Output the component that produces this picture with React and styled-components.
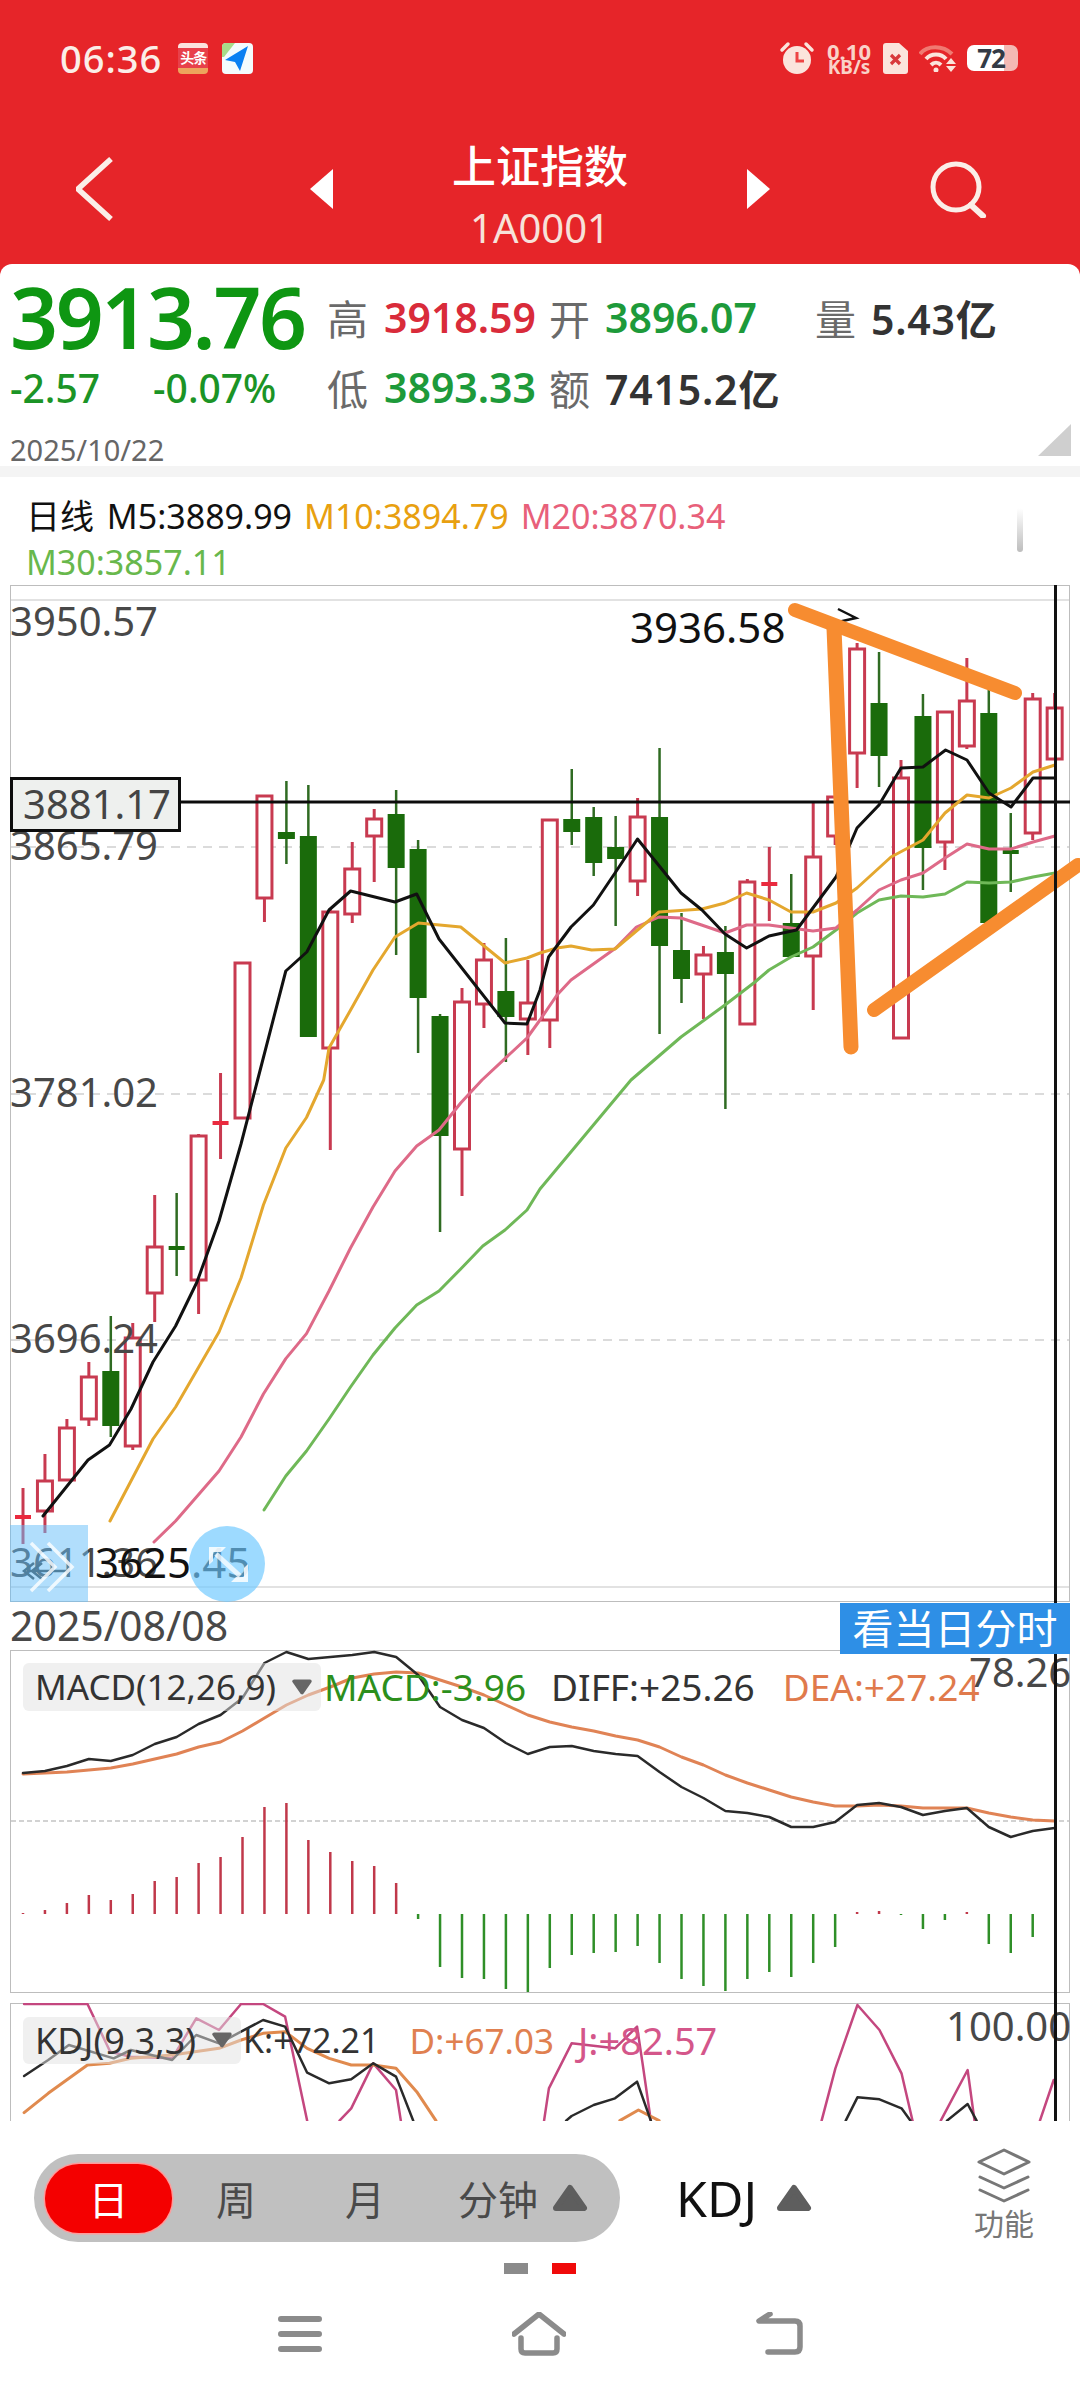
import React from "react"
import styled, {createGlobalStyle} from "styled-components"

const GlobalStyle = createGlobalStyle`
  html, body {
    margin: 0;
    padding: 0;
    background: #fff;
  }
  body {
    font-family: "Noto Sans", "Noto Sans CJK SC", sans-serif;
  }
  * {
    box-sizing: border-box;
  }
`

const Page = styled.div`
  width: 1080px;
  height: 2400px;
  overflow: hidden;
  background: #e62529;
`

/* ---- red header ---- */
const Header = styled.header`
  height: 264px;
  padding-top: 40px;
  color: #fbeee8;
`

const StatusBar = styled.div`
  height: 36px;
  padding: 0 62px 0 60px;
  display: flex;
  align-items: center;
  justify-content: space-between;
`

const StatusGroup = styled.div`
  display: flex;
  align-items: center;
  gap: ${props => props.$gap || 14}px;
`

const Clock = styled.span`
  font-size: 38px;
  font-weight: 500;
  line-height: 36px;
  letter-spacing: 1px;
  margin-right: 2px;
`

const NewsIcon = styled.div`
  width: 30px;
  height: 31px;
  border-radius: 4px;
  background: #e8404a;
  border-top: 5px solid #fbe3de;
  border-bottom: 6px solid #eda45c;
  font-size: 14px;
  font-weight: 700;
  line-height: 20px;
  text-align: center;
  letter-spacing: -1px;
  color: #fff;
  overflow: hidden;
`

const Speed = styled.div`
  width: 46px;
  display: flex;
  flex-direction: column;
  align-items: center;
  color: #f9d2c8;
  font-weight: 700;
`

const SpeedLine = styled.span`
  font-size: ${props => props.$size}px;
  line-height: ${props => props.$size - 4}px;
`

const Battery = styled.div`
  width: 51px;
  height: 26px;
  border-radius: 7px;
  background: linear-gradient(90deg, #fff 0, #fff 72%, #f4b9b4 72%, #f4b9b4 100%);
  color: #333a45;
  font-size: 26px;
  font-weight: 700;
  line-height: 26px;
  text-align: center;
  letter-spacing: -1px;
  padding-right: 3px;
`

const NavBar = styled.div`
  margin-top: 65px;
  height: 96px;
  display: grid;
  grid-template-columns: 1fr auto 1fr;
  align-items: center;
`

const NavSide = styled.div`
  display: flex;
  justify-content: ${props => props.$end ? "flex-end" : "flex-start"};
  padding: 0 ${props => props.$end ? 92 : 0}px 0 ${props => props.$end ? 0 : 76}px;
`

const NavCenter = styled.div`
  display: flex;
  align-items: center;
  gap: 115px;
`

const TitleBlock = styled.div`
  width: 182px;
  height: 96px;
  text-align: center;
`

const Title = styled.div`
  font-size: 44px;
  font-weight: 500;
  line-height: 50px;
  color: #fff;
`

const Code = styled.div`
  margin-top: 14px;
  font-size: 40px;
  line-height: 46px;
  color: #f7e2da;
`

/* ---- quote block ---- */
const Quote = styled.section`
  height: 202px;
  background: #fff;
  border-radius: 12px 12px 0 0;
  padding-top: 18px;
`

const QuoteRows = styled.div`
  display: grid;
  grid-template-columns: 317px 57px 165px 56px 210px 56px auto;
  grid-auto-rows: 70px;
  align-items: center;
  padding-left: 10px;
`

const BigPrice = styled.div`
  font-size: 84px;
  font-weight: 600;
  line-height: 70px;
  letter-spacing: -2.4px;
  color: #0e9612;
`

const Deltas = styled.div`
  display: flex;
  gap: 53px;
  font-size: 39px;
  font-weight: 500;
  color: #1b9426;
`

const FieldLabel = styled.span`
  font-size: 41px;
  color: #6a6a6a;
`

const FieldValue = styled.span`
  font-size: 41px;
  font-weight: 600;
  white-space: nowrap;
  letter-spacing: ${props => props.$wide ? 0.8 : 0}px;
  color: ${props => props.$color || "#333"};
`

const QuoteFoot = styled.div`
  height: 44px;
  padding: 0 9px 0 10px;
  display: flex;
  align-items: flex-end;
  justify-content: space-between;
`

const QuoteDate = styled.span`
  font-size: 29px;
  line-height: 32px;
  color: #666;
`

const Corner = styled.div`
  width: 33px;
  height: 32px;
  margin-bottom: 10px;
  background: #cfcfcf;
  clip-path: polygon(100% 0, 100% 100%, 0 100%);
`

const Band = styled.div`
  height: 11px;
  background: #f4f4f4;
`

/* ---- moving average legend ---- */
const Legend = styled.div`
  height: 108px;
  padding: 17px 57px 0 26px;
  background: #fff;
  display: flex;
  justify-content: space-between;
`

const LegendItems = styled.div`
  width: 720px;
  display: flex;
  flex-wrap: wrap;
  column-gap: 12px;
`

const LegendItem = styled.span`
  font-size: 34px;
  line-height: 44px;
  white-space: nowrap;
  word-spacing: 4px;
  color: ${props => props.$color};
`

const ScrollPill = styled.div`
  width: 6px;
  height: 44px;
  margin-top: 14px;
  border-radius: 3px;
  background: linear-gradient(180deg, #fff, #bdbdbd);
`

/* ---- chart stack ---- */
const Stage = styled.div`
  position: relative;
  height: 1536px;
  background: #fff;
`

const Crosshair = styled.div`
  position: absolute;
  top: 0;
  bottom: 0;
  left: 1054px;
  width: 3px;
  background: #111;
  z-index: 1;
`

const Frame = styled.div`
  position: relative;
  margin: ${props => props.$gap || 0}px 10px 0;
  height: ${props => props.$height}px;
  border: 1.5px solid #bdbdbd;
  ${props => props.$open && "border-bottom: 0;"}
`

const Plot = styled.svg`
  position: absolute;
  left: -11.5px;
  top: -1.5px;
  display: block;
  overflow: ${props => props.$clip ? "hidden" : "visible"};
`

const AxisLabel = styled.span`
  position: absolute;
  left: ${props => props.$left}px;
  top: ${props => props.$top}px;
  font-size: ${props => props.$size || 40}px;
  line-height: 1;
  color: ${props => props.$color || "#484848"};
`

const PriceTag = styled.div`
  position: absolute;
  left: -1px;
  top: 191px;
  width: 171px;
  height: 55px;
  border: 3.5px solid #0c0c0c;
  background: #eef0ee;
  padding-left: 10px;
  font-size: 40px;
  line-height: 48px;
  color: #444;
`

const PanLeft = styled.div`
  position: absolute;
  left: -1px;
  top: 939px;
  width: 78px;
  height: 77px;
  background: rgba(100, 190, 250, 0.5);
  z-index: 1;
`

const ZoomBall = styled.div`
  position: absolute;
  left: 178px;
  top: 940px;
  width: 76px;
  height: 76px;
  border-radius: 50%;
  background: rgba(110, 200, 255, 0.68);
  z-index: 1;
`

const DateRow = styled.div`
  height: 48px;
  padding: 0 10px;
  display: flex;
  align-items: flex-start;
  justify-content: space-between;
`

const ChartDate = styled.span`
  font-size: 41px;
  line-height: 46px;
  color: #484848;
`

const DayButton = styled.div`
  position: relative;
  z-index: 2;
  width: 230px;
  height: 51px;
  margin-top: 1px;
  background: #2e8fe6;
  font-size: 41px;
  line-height: 50px;
  text-align: center;
  color: #fff;
`

const IndicatorHead = styled.div`
  position: absolute;
  left: 12px;
  top: ${props => props.$top}px;
  display: flex;
  align-items: center;
  white-space: nowrap;
`

const IndicatorChip = styled.div`
  display: flex;
  align-items: center;
  justify-content: space-between;
  width: ${props => props.$width}px;
  height: ${props => props.$height}px;
  padding: 0 8px 0 12px;
  border-radius: 6px;
  background: rgba(225, 225, 225, 0.5);
  font-size: ${props => props.$size}px;
  color: #333;
`

const IndicatorValue = styled.span`
  margin-left: ${props => props.$gap || 0}px;
  font-size: ${props => props.$size}px;
  color: ${props => props.$color};
`

/* ---- bottom tools ---- */
const Tools = styled.div`
  height: 279px;
  background: #fff;
  padding-top: 33px;
`

const ToolRow = styled.div`
  height: 88px;
  padding-left: 34px;
  display: flex;
  align-items: center;
`

const PeriodPill = styled.div`
  width: 586px;
  height: 88px;
  flex-shrink: 0;
  border-radius: 44px;
  background: #c0c0c0;
  padding-left: 11px;
  display: flex;
  align-items: center;
`

const Period = styled.div`
  display: flex;
  align-items: center;
  justify-content: center;
  gap: 14px;
  flex-shrink: 0;
  width: ${props => props.$width}px;
  height: 69px;
  font-size: 40px;
  color: ${props => props.$active ? "#fff" : "#4a4a4a"};
  background: ${props => props.$active ? "#f40000" : "transparent"};
  border-radius: 34px;
  ${props => props.$active && "box-shadow: 0 0 0 1.5px #ff9a9a;"}
`

const IndicatorPick = styled.div`
  margin-left: 56px;
  display: flex;
  align-items: center;
  gap: 19px;
  font-size: 50px;
  color: #111;
`

const More = styled.div`
  margin-left: auto;
  margin-right: 46px;
  margin-top: -6px;
  width: 60px;
  display: flex;
  flex-direction: column;
  align-items: center;
  font-size: 30px;
  line-height: 38px;
  white-space: nowrap;
  color: #777;
`

const Dots = styled.div`
  margin-top: 21px;
  display: flex;
  justify-content: center;
  gap: 24px;
`

const Dot = styled.div`
  width: 24px;
  height: 11px;
  background: ${props => props.$active ? "#f00a0a" : "#8b8b8b"};
`

const SystemNav = styled.div`
  margin-top: 38px;
  padding-left: 278px;
  display: flex;
  align-items: center;
  gap: 190px;
`

/* ---- data, in page pixels ---- */
const MAIN_BOX = "0 585 1080 1017"
const xAt = i => 23 + 21.95 * i

// [colour, wick top, body top, body bottom, wick bottom]; a doji has top === bottom
const CANDLES = [
  ["r", 1488, 1517, 1517, 1544], ["r", 1454, 1481, 1511, 1533], ["r", 1419, 1428, 1480, 1480], ["r", 1362, 1377, 1419, 1426],
  ["g", 1316, 1371, 1426, 1437], ["r", 1323, 1338, 1446, 1450], ["r", 1195, 1247, 1293, 1322], ["g", 1193, 1248, 1248, 1276],
  ["r", 1134, 1136, 1280, 1314], ["r", 1073, 1123, 1123, 1159], ["r", 963, 963, 1118, 1118], ["r", 796, 796, 898, 922],
  ["g", 781, 832, 839, 864], ["g", 785, 836, 1037, 1037], ["r", 908, 912, 1048, 1150], ["r", 842, 869, 914, 923],
  ["r", 809, 819, 836, 882], ["g", 790, 814, 868, 955], ["g", 840, 849, 998, 1053], ["g", 1014, 1016, 1136, 1232],
  ["r", 988, 1002, 1149, 1196], ["r", 943, 960, 1004, 1028], ["g", 938, 991, 1017, 1062], ["r", 960, 1003, 1019, 1055],
  ["r", 820, 820, 1020, 1048], ["g", 769, 819, 832, 845], ["g", 807, 817, 863, 876], ["g", 816, 847, 859, 926],
  ["r", 798, 817, 881, 896], ["g", 748, 817, 946, 1034], ["g", 913, 950, 979, 1003], ["r", 946, 955, 974, 1019],
  ["g", 926, 952, 974, 1109], ["r", 879, 882, 1024, 1024], ["r", 847, 884, 884, 921], ["g", 874, 923, 957, 957],
  ["r", 803, 857, 956, 1010], ["r", 797, 797, 836, 845], ["r", 643, 649, 753, 788], ["g", 652, 703, 756, 787],
  ["r", 760, 778, 1038, 1038], ["g", 694, 716, 848, 890], ["r", 712, 712, 842, 870], ["r", 658, 701, 746, 749],
  ["g", 690, 713, 923, 923], ["g", 813, 852, 852, 892], ["r", 693, 699, 833, 840], ["r", 693, 708, 759, 759],
]

const M5 = [[43, 1516], [88, 1460], [109.5, 1445], [131, 1409], [153, 1362], [175.6, 1326], [197, 1282], [219, 1221], [241, 1144], [257.6, 1080], [285.8, 971], [306.8, 952], [329, 910], [350.6, 891], [395, 902], [416.7, 894], [439, 939], [505, 1023], [527, 1024], [540, 990], [548.6, 957], [571, 927], [593.4, 905], [615, 873], [637.5, 839], [681, 893], [702, 910], [725, 934], [746.6, 948], [769, 936], [796.5, 930], [836, 877], [857, 828], [879, 805], [901, 768], [923, 767], [945.6, 750], [967, 760], [989, 793], [1011, 807], [1033, 778], [1055, 778]]
const M10 = [[110, 1521], [153, 1439], [175.6, 1407], [219, 1332], [241, 1278], [263.4, 1205], [285.8, 1148], [306.5, 1117.5], [323.7, 1080], [329, 1048], [350.6, 1010], [373, 970], [395, 937], [418.4, 923], [460.7, 927], [505, 963], [527, 958], [540, 953], [557, 948], [571, 946], [591.6, 950], [615, 949], [659, 912], [702, 909], [725, 903], [746.6, 893], [769, 900], [791, 912], [813, 912], [836, 903], [857, 888], [891, 857], [923, 840], [945, 813], [967, 795], [989, 798], [1011, 788], [1033, 772], [1055, 765]]
const M20 = [[154, 1542], [175.6, 1521], [219, 1471], [241, 1437], [263.4, 1394], [285.8, 1358.6], [306.5, 1333.6], [329, 1291], [350.5, 1248], [373, 1207], [395, 1171], [416.7, 1146], [439, 1130], [460.7, 1103], [482, 1080], [527, 1038], [540, 1020], [557, 995], [571, 980], [615.8, 948], [636.4, 927], [659, 917], [681, 918], [725, 933], [746.6, 925], [769, 925], [813, 931], [836, 928], [857, 910], [879, 890], [901, 880], [923, 873], [945, 858], [967, 844], [989, 849], [1011, 849], [1033, 842], [1055, 836]]
const M30 = [[264, 1510], [285.8, 1476], [306.5, 1451], [329, 1419], [350.5, 1387], [373, 1355], [395, 1328], [416.7, 1305], [439, 1291], [460.7, 1269], [482.8, 1246], [505, 1230], [527, 1210], [540, 1189], [631, 1080], [681, 1037], [725, 1005], [755, 982], [769, 970], [791, 957], [813, 947], [836, 930], [857, 913], [879, 900], [901, 896], [923, 897], [945, 894], [967, 882], [989, 883], [1011, 882], [1033, 877], [1055, 873]]

const DIFF = [1773, 1771, 1766, 1759, 1761, 1755, 1744, 1737, 1724, 1715, 1698, 1663, 1652, 1659, 1657, 1655, 1652, 1657, 1675, 1707, 1720, 1728, 1743, 1754, 1747, 1746, 1751, 1754, 1756, 1772, 1787, 1798, 1811, 1813, 1817, 1827, 1827, 1822, 1805, 1803, 1807, 1815, 1811, 1808, 1827, 1837, 1831, 1828]
const DEA = [1774, 1773, 1772, 1770, 1768, 1764, 1759, 1754, 1747, 1742, 1731, 1718, 1705, 1695, 1687, 1678, 1674, 1672, 1673, 1680, 1687, 1695, 1705, 1715, 1722, 1727, 1731, 1736, 1740, 1747, 1757, 1765, 1775, 1783, 1790, 1797, 1802, 1806, 1806, 1805, 1806, 1808, 1808, 1808, 1813, 1817, 1820, 1821]
const MACD_ZERO = 1914
const MACD_BARS = [1913, 1910, 1903, 1895, 1900, 1894, 1881, 1877, 1863, 1857, 1837, 1807, 1803, 1840, 1852, 1861, 1866, 1883, 1919, 1967, 1978, 1979, 1989, 1992, 1968, 1955, 1953, 1952, 1946, 1963, 1979, 1986, 1991, 1979, 1972, 1977, 1963, 1947, 1912, 1911, 1915, 1929, 1920, 1912, 1944, 1953, 1937]

// KDJ traces are cut by the panel bottom, each one is a list of runs
const kdj = runs => runs.map(run => run.map(([x, y]) => [x / 1.452, 1980 + y / 3]))
const KDJ_J = kdj([
  [[35, 72], [127, 72], [160, 215], [190, 230], [250, 235], [285, 115], [318, 150], [350, 72], [382, 72], [414, 110], [446, 422]],
  [[493, 422], [510, 385], [542, 250], [575, 330], [582, 422]],
  [[790, 422], [797, 325], [830, 190], [893, 205], [925, 140], [933, 250], [945, 422]],
  [[1193, 422], [1213, 265], [1245, 75], [1277, 150], [1309, 280], [1325, 422]],
  [[1366, 422], [1405, 270], [1415, 422]],
  [[1510, 422], [1530, 300]],
])
const KDJ_K = kdj([
  [[35, 288], [70, 240], [100, 195], [165, 235], [190, 210], [250, 240], [285, 165], [318, 190], [350, 155], [382, 120], [414, 140], [446, 278], [478, 310], [510, 298], [542, 250], [575, 290], [600, 422]],
  [[822, 422], [830, 408], [862, 375], [893, 355], [925, 305], [945, 422]],
  [[1228, 422], [1245, 352], [1277, 358], [1309, 385], [1322, 422]],
  [[1375, 422], [1405, 372], [1418, 422]],
])
const KDJ_D = kdj([
  [[35, 398], [70, 340], [127, 255], [159, 250], [190, 235], [250, 225], [318, 205], [350, 180], [382, 160], [414, 155], [446, 205], [478, 235], [510, 255], [542, 255], [575, 265], [605, 335], [633, 422]],
  [[900, 422], [927, 390], [957, 422]],
])

const toPoints = pts => pts.map(p => p.join(",")).join(" ")
const Line = ({pts, color, width = 3}) => (
  <polyline points={toPoints(pts)} fill="none" stroke={color} strokeWidth={width} strokeLinejoin="round" strokeLinecap="round"/>
)

const Candle = ({data, index}) => {
  const [kind, wickTop, top, bottom, wickBottom] = data
  const x = xAt(index)
  const red = kind === "r"
  const color = red ? "#c83a50" : "#1a6b0b"
  const wick = red ? 3 : 2.5
  const isDoji = top === bottom
  return (
    <g>
      <line x1={x} x2={x} y1={wickTop} y2={wickBottom} stroke={red ? color : "#2f6b22"} strokeWidth={wick}/>
      {isDoji && <rect x={x - 8} y={top - 2} width={16} height={4} fill={red ? "#ea2a3e" : color}/>}
      {!isDoji && red && <rect x={x - 7.5} y={top} width={15} height={bottom - top} fill="#fff" stroke={color} strokeWidth={3}/>}
      {!isDoji && !red && <rect x={x - 8.5} y={top} width={17} height={bottom - top} fill={color}/>}
    </g>
  )
}

const MainChart = () => (
  <Plot width="1080" height="1017" viewBox={MAIN_BOX}>
    <line x1="11" x2="1069" y1="600" y2="600" stroke="#d8d8d8" strokeWidth="1.5"/>
    <line x1="11" x2="1069" y1="1587" y2="1587" stroke="#d8d8d8" strokeWidth="1.5"/>
    {[847, 1094, 1340].map(y => (
      <line key={y} x1="11" x2="1069" y1={y} y2={y} stroke="#cfcfcf" strokeWidth="1.5" strokeDasharray="9 7"/>
    ))}
    {CANDLES.map((c, i) => <Candle key={i} data={c} index={i}/>)}
    <line x1="180" x2="1070" y1="802" y2="802" stroke="#0c0c0c" strokeWidth="3"/>
    <Line pts={M30} color="#6fb858"/>
    <Line pts={M20} color="#de6a88"/>
    <Line pts={M10} color="#e4a72e"/>
    <Line pts={M5} color="#111"/>
    <polyline points="838,609 856,618 838,622" fill="none" stroke="#111" strokeWidth="2.5"/>
    <g stroke="#f78c30" strokeLinecap="round">
      <line x1="795" y1="610" x2="1015" y2="693" strokeWidth="14"/>
      <line x1="834" y1="628" x2="851" y2="1047" strokeWidth="15"/>
      <line x1="874" y1="1010" x2="1078" y2="865" strokeWidth="14"/>
    </g>
  </Plot>
)

const MacdChart = () => (
  <Plot width="1080" height="343" viewBox="0 1650 1080 343">
    <line x1="11" x2="1069" y1="1821" y2="1821" stroke="#c4c4c4" strokeWidth="1.5" strokeDasharray="5 3"/>
    {MACD_BARS.map((y, i) => (
      <line key={i} x1={xAt(i)} x2={xAt(i)} y1={MACD_ZERO} y2={y} stroke={y < MACD_ZERO ? "#c0384a" : "#2f8f28"} strokeWidth="2.5"/>
    ))}
    <Line pts={DEA.map((y, i) => [xAt(i), y])} color="#e08355"/>
    <Line pts={DIFF.map((y, i) => [xAt(i), y])} color="#2a2a2a" width={2.5}/>
  </Plot>
)

const KdjChart = () => (
  <Plot $clip width="1080" height="118" viewBox="0 2003 1080 118">
    {KDJ_J.map((run, i) => <Line key={i} pts={run} color="#c4477f" width={2.5}/>)}
    {KDJ_D.map((run, i) => <Line key={i} pts={run} color="#e08a4e"/>)}
    {KDJ_K.map((run, i) => <Line key={i} pts={run} color="#2a2a2a" width={2.5}/>)}
  </Plot>
)

const Caret = ({w = 36, h = 28, color = "#5e5e5e", down}) => (
  <svg width={w} height={h} viewBox="0 0 36 28">
    <polygon points={down ? "4,4 32,4 18,24" : "18,4 32,24 4,24"} fill={color} stroke={color} strokeWidth="6" strokeLinejoin="round"/>
  </svg>
)

const PlaneApp = () => (
  <svg width="31" height="31" viewBox="0 0 31 31">
    <rect width="31" height="31" rx="4" fill="#f4fbfd"/>
    <path d="M0 4a4 4 0 0 1 4-4h9L2 14H0z" fill="#a8dc8a"/>
    <path d="M26 3 3 17l10 2 5 9z" fill="#0a80f2"/>
  </svg>
)

const AlarmIcon = () => (
  <svg width="36" height="36" viewBox="0 0 36 36">
    <circle cx="18" cy="20" r="14" fill="#fbe4dc"/>
    <path d="M3 10l6-6M33 10l-6-6" stroke="#fbe4dc" strokeWidth="3.5" strokeLinecap="round"/>
    <path d="M18 12v9h7" fill="none" stroke="#e44" strokeWidth="3"/>
  </svg>
)

const SimIcon = () => (
  <svg width="25" height="31" viewBox="0 0 25 31">
    <path d="M3 0h13l9 8v20a3 3 0 0 1-3 3H3a3 3 0 0 1-3-3V3a3 3 0 0 1 3-3z" fill="#fbe4dc"/>
    <path d="M8 12l9 9M17 12l-9 9" stroke="#d8393c" strokeWidth="3.2"/>
  </svg>
)

const WifiIcon = () => (
  <svg width="37" height="27" viewBox="0 0 37 27">
    <path d="M1 9C8 0 24 0 33 9" fill="none" stroke="#f07a72" strokeWidth="4"/>
    <path d="M7 14c5-6 15-6 20 0" fill="none" stroke="#fbe4dc" strokeWidth="4"/>
    <path d="M12 20c3-3 7-3 10 0" fill="none" stroke="#fbe4dc" strokeWidth="4"/>
    <circle cx="17" cy="25" r="2.5" fill="#fbe4dc"/>
    <path d="M32 13l5 6h-10zM27 21h10l-5 6z" fill="#fbe4dc"/>
  </svg>
)

const BackIcon = () => (
  <svg width="37" height="64" viewBox="0 0 37 64">
    <polyline points="35,2 2,32 35,62" fill="none" stroke="#fbeee8" strokeWidth="5.5"/>
  </svg>
)

const SearchIcon = () => (
  <svg width="58" height="58" viewBox="0 0 58 58">
    <circle cx="26" cy="27" r="23" fill="none" stroke="#fbeee8" strokeWidth="5"/>
    <path d="M41 45l12 11" stroke="#fbeee8" strokeWidth="6" strokeLinecap="round"/>
  </svg>
)

const SideArrow = ({right}) => (
  <svg width="24" height="40" viewBox="0 0 24 40">
    <polygon points={right ? "1,0 24,20 1,40" : "23,0 0,20 23,40"} fill="#fff"/>
  </svg>
)

const LayersIcon = () => (
  <svg width="58" height="58" viewBox="0 0 58 58">
    <g fill="none" stroke="#777" strokeWidth="3" strokeLinecap="round" strokeLinejoin="round">
      <path d="M29 3l25 12-25 12L4 15z"/>
      <path d="M5 30l24 11 24-11"/>
      <path d="M5 43l24 11 24-11"/>
    </g>
  </svg>
)

const MenuIcon = () => (
  <svg width="44" height="38" viewBox="0 0 44 38">
    <path d="M3 4h38M3 19h38M3 34h38" stroke="#8b8b8b" strokeWidth="6" strokeLinecap="round"/>
  </svg>
)

const HomeIcon = () => (
  <svg width="54" height="44" viewBox="0 0 54 44">
    <path d="M2 22L27 2l25 20" fill="none" stroke="#8b8b8b" strokeWidth="5.5" strokeLinecap="round" strokeLinejoin="round"/>
    <path d="M9 26v11q0 4 4 4h28q4 0 4-4V26" fill="none" stroke="#8b8b8b" strokeWidth="5.5" strokeLinecap="round"/>
  </svg>
)

const ReturnIcon = () => (
  <svg width="47" height="44" viewBox="0 0 47 44">
    <path d="M14 2L3 9h36q5 0 5 5v21q0 5-5 5H12" fill="none" stroke="#8b8b8b" strokeWidth="5.5" strokeLinecap="round" strokeLinejoin="round"/>
  </svg>
)

const PanArrows = () => (
  <svg width="78" height="77" viewBox="0 0 78 77">
    <path d="M17 46H60M24 38l-10 8 10 8M32 38l-10 8 10 8" fill="none" stroke="#4e7f9e" strokeWidth="2.5"/>
    <path d="M21 18l24 24-24 24M38 18l24 24-24 24" fill="none" stroke="#fff" strokeOpacity="0.8" strokeWidth="3.5"/>
  </svg>
)

const ExpandIcon = () => (
  <svg width="76" height="76" viewBox="0 0 76 76">
    <path d="M20 21h17l-5 5-8 0 0 9-4 4zM59 56H42l5-5h8v-9l4-4z" fill="#fff" fillOpacity="0.85"/>
    <path d="M27 28l24 22" stroke="#fff" strokeOpacity="0.75" strokeWidth="5"/>
  </svg>
)

const App = () => (
  <Page>
    <GlobalStyle/>
    <Header>
      <StatusBar>
        <StatusGroup>
          <Clock>06:36</Clock>
          <NewsIcon>头条</NewsIcon>
          <PlaneApp/>
        </StatusGroup>
        <StatusGroup $gap={11}>
          <AlarmIcon/>
          <Speed>
            <SpeedLine $size={22}>0.10</SpeedLine>
            <SpeedLine $size={19}>KB/s</SpeedLine>
          </Speed>
          <SimIcon/>
          <WifiIcon/>
          <Battery>72</Battery>
        </StatusGroup>
      </StatusBar>
      <NavBar>
        <NavSide><BackIcon/></NavSide>
        <NavCenter>
          <SideArrow/>
          <TitleBlock>
            <Title>上证指数</Title>
            <Code>1A0001</Code>
          </TitleBlock>
          <SideArrow right/>
        </NavCenter>
        <NavSide $end><SearchIcon/></NavSide>
      </NavBar>
    </Header>

    <Quote>
      <QuoteRows>
        <BigPrice>3913.76</BigPrice>
        <FieldLabel>高</FieldLabel>
        <FieldValue $color="#d92b3a">3918.59</FieldValue>
        <FieldLabel>开</FieldLabel>
        <FieldValue $color="#1d9a3a">3896.07</FieldValue>
        <FieldLabel>量</FieldLabel>
        <FieldValue $wide>5.43亿</FieldValue>

        <Deltas>
          <span>-2.57</span>
          <span>-0.07%</span>
        </Deltas>
        <FieldLabel>低</FieldLabel>
        <FieldValue $color="#1d9a3a">3893.33</FieldValue>
        <FieldLabel>额</FieldLabel>
        <FieldValue $wide>7415.2亿</FieldValue>
      </QuoteRows>
      <QuoteFoot>
        <QuoteDate>2025/10/22</QuoteDate>
        <Corner/>
      </QuoteFoot>
    </Quote>
    <Band/>

    <Legend>
      <LegendItems>
        <LegendItem $color="#111">日线 M5:3889.99</LegendItem>
        <LegendItem $color="#e8a010">M10:3894.79</LegendItem>
        <LegendItem $color="#e8607a">M20:3870.34</LegendItem>
        <LegendItem $color="#68b84c">M30:3857.11</LegendItem>
      </LegendItems>
      <ScrollPill/>
    </Legend>

    <Stage>
      <Frame $height={1017}>
        <MainChart/>
        <AxisLabel $left={-1} $top={15}>3950.57</AxisLabel>
        <AxisLabel $left={619} $top={20} $size={42} $color="#111">3936.58</AxisLabel>
        <AxisLabel $left={-1} $top={239}>3865.79</AxisLabel>
        <PriceTag>3881.17</PriceTag>
        <AxisLabel $left={-1} $top={486}>3781.02</AxisLabel>
        <AxisLabel $left={-1} $top={732}>3696.24</AxisLabel>
        <AxisLabel $left={-1} $top={956}>3611.36</AxisLabel>
        <AxisLabel $left={84} $top={955} $size={42} $color="#111">3625.45</AxisLabel>
        <PanLeft><PanArrows/></PanLeft>
        <ZoomBall><ExpandIcon/></ZoomBall>
      </Frame>

      <DateRow>
        <ChartDate>2025/08/08</ChartDate>
        <DayButton>看当日分时</DayButton>
      </DateRow>

      <Frame $height={343}>
        <MacdChart/>
        <IndicatorHead $top={10}>
          <IndicatorChip $width={298} $height={48} $size={35}>
            MACD(12,26,9)
            <Caret w={22} h={16} color="#666" down/>
          </IndicatorChip>
          <IndicatorValue $gap={3} $size={37} $color="#2c8f1c">MACD:-3.96</IndicatorValue>
          <IndicatorValue $gap={25} $size={37} $color="#333">DIFF:+25.26</IndicatorValue>
          <IndicatorValue $gap={28} $size={37} $color="#e07a4c">DEA:+27.24</IndicatorValue>
        </IndicatorHead>
        <AxisLabel $left={958} $top={1}>78.26</AxisLabel>
      </Frame>

      <Frame $gap={10} $open $height={118}>
        <KdjChart/>
        <IndicatorHead $top={10}>
          <IndicatorChip $width={218} $height={47} $size={36}>
            KDJ(9,3,3)
            <Caret w={22} h={16} color="#666" down/>
          </IndicatorChip>
          <IndicatorValue $gap={2} $size={34} $color="#333">K:+72.21</IndicatorValue>
          <IndicatorValue $gap={30} $size={35} $color="#e08050">D:+67.03</IndicatorValue>
          <IndicatorValue $gap={24} $size={38} $color="#d4568a">J:+82.57</IndicatorValue>
        </IndicatorHead>
        <AxisLabel $left={935} $top={2}>100.00</AxisLabel>
      </Frame>
      <Crosshair/>
    </Stage>

    <Tools>
      <ToolRow>
        <PeriodPill>
          <Period $width={127} $active>日</Period>
          <Period $width={128}>周</Period>
          <Period $width={130}>月</Period>
          <Period $width={186}>
            分钟
            <Caret/>
          </Period>
        </PeriodPill>
        <IndicatorPick>
          KDJ
          <Caret/>
        </IndicatorPick>
        <More>
          <LayersIcon/>
          功能
        </More>
      </ToolRow>
      <Dots>
        <Dot/>
        <Dot $active/>
      </Dots>
      <SystemNav>
        <MenuIcon/>
        <HomeIcon/>
        <ReturnIcon/>
      </SystemNav>
    </Tools>
  </Page>
)

export default App
